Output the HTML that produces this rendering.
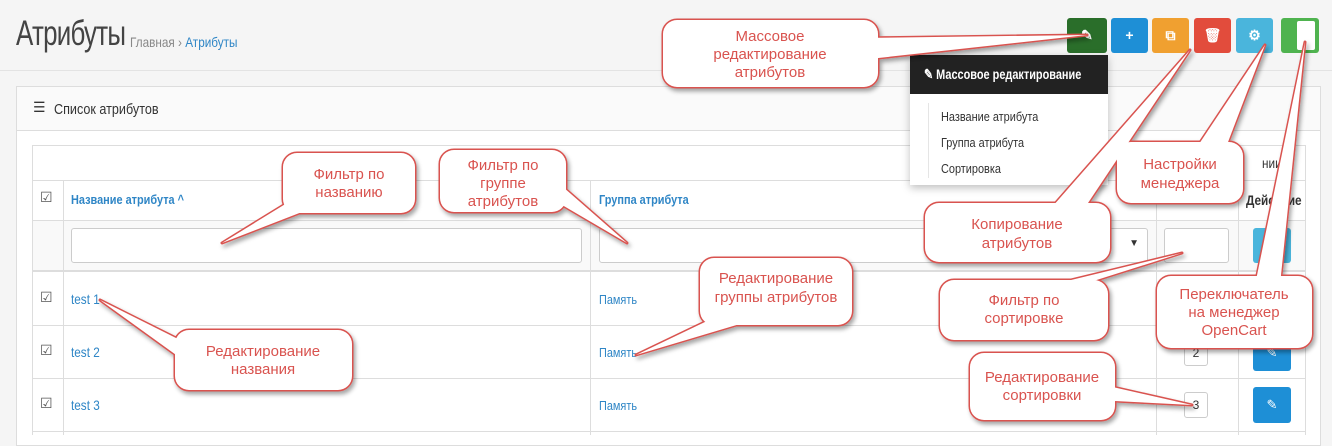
<!DOCTYPE html>
<html><head><meta charset="utf-8"><style>
*{margin:0;padding:0;box-sizing:border-box}
body{width:1332px;height:435px;overflow:hidden;background:#f5f5f5;position:relative;font-family:"Liberation Sans",sans-serif;color:#333}
.a{position:absolute;white-space:nowrap}
.n{transform:scaleX(.84);transform-origin:left center}
.h1{left:16px;top:14px;font-size:35px;color:#444;transform:scaleX(.74);transform-origin:left;letter-spacing:-1px}
.bc{left:130px;top:34px;font-size:14px;color:#888}
.bc b{font-weight:normal;color:#2f86c6}
.btn{top:18px;height:35px;width:37px;border-radius:3px;color:#fff;font-size:14px;font-weight:bold;text-align:center;line-height:35px}
.panel{left:16px;top:86px;width:1305px;height:360px;background:#fff;border:1px solid #ddd}
.ph{left:0;top:0;width:100%;height:44px;background:#fafafa;border-bottom:1px solid #ddd}
.line{background:#ddd}
.lnk{color:#2f86c6;font-size:14px}
.th{color:#2f86c6;font-weight:bold;font-size:13px}
.inp{background:#fff;border:1px solid #ccc;border-radius:3px}
.cb{font-size:14px;color:#555}
.eb{background:#1e8fd6;border-radius:3px;width:38px;height:36px}
.dd{left:910px;top:55px;width:198px;height:130px;background:#fff;box-shadow:0 3px 8px rgba(0,0,0,.25)}
.ddh{position:absolute;left:0;top:0;width:198px;height:39px;background:#222}
.ddi{font-size:13px;color:#333;position:absolute;left:31px}
</style></head><body>
<div class="a h1">Атрибуты</div>
<div class="a bc n">Главная › <b>Атрибуты</b></div>
<div class="a" style="left:0;top:70px;width:1332px;height:1px;background:#e3e3e3"></div>
<div class="a btn" style="left:1067px;background:#2a6e2a;width:40px">✎</div>
<div class="a btn" style="left:1111px;background:#1e8fd6">+</div>
<div class="a btn" style="left:1152px;background:#f0a030">⧉</div>
<div class="a btn" style="left:1194px;background:#e24c3c">🗑</div>
<div class="a btn" style="left:1236px;background:#4ab5dc">⚙</div>
<div class="a btn" style="left:1281px;background:#4fb34f;width:38px"><div class="a" style="left:16px;top:3px;width:18px;height:29px;background:#fff;border-radius:2px"></div></div>

<div class="a panel">
<div class="a ph"></div>
<div class="a" style="left:16px;top:12px;font-size:14px">☰</div>
<div class="a n" style="left:37px;top:14px;font-size:15px">Список атрибутов</div>
</div>
<div class="a" style="left:32px;top:145px;width:1274px;height:290px;border:1px solid #ddd;border-bottom:none;background:#fff"></div>
<div class="a" style="left:33px;top:220px;width:1272px;height:52px;background:#f9f9f9"></div>
<div class="a line" style="left:32px;top:180px;width:1274px;height:1px"></div>
<div class="a line" style="left:32px;top:220px;width:1274px;height:1px"></div>
<div class="a" style="left:32px;top:270px;width:1274px;height:2px;background:#ddd"></div>
<div class="a line" style="left:32px;top:325px;width:1274px;height:1px"></div>
<div class="a line" style="left:32px;top:378px;width:1274px;height:1px"></div>
<div class="a line" style="left:32px;top:431px;width:1274px;height:1px"></div>
<div class="a line" style="left:63px;top:180px;width:1px;height:255px"></div>
<div class="a line" style="left:590px;top:180px;width:1px;height:255px"></div>
<div class="a line" style="left:1156px;top:180px;width:1px;height:255px"></div>
<div class="a line" style="left:1238px;top:180px;width:1px;height:255px"></div>
<div class="a n" style="left:1262px;top:155px;font-size:14px">нии)</div>
<div class="a n" style="left:1246px;top:192px;font-size:14px;font-weight:bold">Действие</div>
<div class="a cb" style="left:40px;top:189px">☑</div>
<div class="a th n" style="left:71px;top:192px">Название атрибута ^</div>
<div class="a th n" style="left:599px;top:192px">Группа атрибута</div>
<div class="a inp" style="left:71px;top:228px;width:511px;height:35px"></div>
<div class="a inp" style="left:599px;top:228px;width:549px;height:35px"><span class="a" style="right:8px;top:9px;font-size:10px">▼</span></div>
<div class="a inp" style="left:1164px;top:228px;width:65px;height:35px"></div>
<div class="a" style="left:1253px;top:228px;width:38px;height:35px;background:#4ab5dc;border-radius:3px"></div>
<div class="a cb" style="left:40px;top:289px">☑</div>
<div class="a cb" style="left:40px;top:342px">☑</div>
<div class="a cb" style="left:40px;top:395px">☑</div>
<div class="a lnk n" style="left:71px;top:291px">test 1</div>
<div class="a lnk n" style="left:71px;top:344px">test 2</div>
<div class="a lnk n" style="left:71px;top:397px">test 3</div>
<div class="a lnk n" style="left:599px;top:292px;font-size:13px">Память</div>
<div class="a lnk n" style="left:599px;top:345px;font-size:13px">Память</div>
<div class="a lnk n" style="left:599px;top:398px;font-size:13px">Память</div>
<div class="a inp" style="left:1184px;top:340px;width:24px;height:26px;font-size:12px;text-align:center;line-height:24px">2</div>
<div class="a inp" style="left:1184px;top:392px;width:24px;height:26px;font-size:12px;text-align:center;line-height:24px">3</div>
<div class="a eb" style="left:1253px;top:335px;color:#fff;text-align:center;line-height:36px;font-size:13px">✎</div>
<div class="a eb" style="left:1253px;top:387px;color:#fff;text-align:center;line-height:36px;font-size:13px">✎</div>

<div class="a dd">
<div class="ddh"></div>
<div class="a n" style="left:14px;top:11px;color:#fff;font-size:14px;font-weight:bold;transform:scaleX(.78)">✎ Массовое редактирование</div>
<div class="a" style="left:18px;top:48px;width:1px;height:75px;background:#e5e5e5"></div>
<div class="ddi n" style="top:54px">Название атрибута</div>
<div class="ddi n" style="top:80px">Группа атрибута</div>
<div class="ddi n" style="top:106px">Сортировка</div>
</div>

<svg class="a" style="left:0;top:0" width="1332" height="435" font-family="Liberation Sans, sans-serif" font-size="15" fill="#d9534f">
<defs><filter id="s" x="-20%" y="-20%" width="140%" height="140%"><feDropShadow dx="2" dy="3" stdDeviation="2" flood-opacity=".35"/></filter></defs>
<g filter="url(#s)" stroke="#d9534f" stroke-width="3" fill="#fff" stroke-linejoin="round">
<polygon points="860,38 1087,35 860,60"/><rect x="663" y="20" width="215" height="67" rx="14"/>
<polygon points="300,195 222,243 320,205"/><rect x="283" y="153" width="132" height="60" rx="14"/>
<polygon points="545,195 627,243 555,180"/><rect x="440" y="150" width="126" height="62" rx="14"/>
<polygon points="1195,150 1265,45 1225,150"/><rect x="1117" y="142" width="126" height="61" rx="14"/>
<polygon points="1045,215 1190,50 1080,215"/><rect x="925" y="203" width="185" height="59" rx="14"/>
<polygon points="1030,290 1182,253 1065,290"/><rect x="940" y="280" width="168" height="60" rx="14"/>
<polygon points="1255,285 1305,42 1280,285"/><rect x="1157" y="276" width="155" height="72" rx="14"/>
<polygon points="730,310 636,355 760,318"/><rect x="700" y="258" width="152" height="67" rx="14"/>
<polygon points="190,345 100,300 190,365"/><rect x="175" y="330" width="177" height="60" rx="14"/>
<polygon points="1095,383 1192,405 1095,400"/><rect x="970" y="353" width="145" height="67" rx="14"/>
</g>
<g fill="#fff">
<polygon points="860,38 1087,35 860,60"/><rect x="663" y="20" width="215" height="67" rx="14"/>
<polygon points="300,195 222,243 320,205"/><rect x="283" y="153" width="132" height="60" rx="14"/>
<polygon points="545,195 627,243 555,180"/><rect x="440" y="150" width="126" height="62" rx="14"/>
<polygon points="1195,150 1265,45 1225,150"/><rect x="1117" y="142" width="126" height="61" rx="14"/>
<polygon points="1045,215 1190,50 1080,215"/><rect x="925" y="203" width="185" height="59" rx="14"/>
<polygon points="1030,290 1182,253 1065,290"/><rect x="940" y="280" width="168" height="60" rx="14"/>
<polygon points="1255,285 1305,42 1280,285"/><rect x="1157" y="276" width="155" height="72" rx="14"/>
<polygon points="730,310 636,355 760,318"/><rect x="700" y="258" width="152" height="67" rx="14"/>
<polygon points="190,345 100,300 190,365"/><rect x="175" y="330" width="177" height="60" rx="14"/>
<polygon points="1095,383 1192,405 1095,400"/><rect x="970" y="353" width="145" height="67" rx="14"/>
</g>
<g text-anchor="middle">
<text x="770" y="41">Массовое</text><text x="770" y="59">редактирование</text><text x="770" y="77">атрибутов</text>
<text x="349" y="179">Фильтр по</text><text x="349" y="197">названию</text>
<text x="503" y="170">Фильтр по</text><text x="503" y="188">группе</text><text x="503" y="206">атрибутов</text>
<text x="1180" y="169">Настройки</text><text x="1180" y="188">менеджера</text>
<text x="1017" y="229">Копирование</text><text x="1017" y="248">атрибутов</text>
<text x="1024" y="305">Фильтр по</text><text x="1024" y="323">сортировке</text>
<text x="1234" y="299">Переключатель</text><text x="1234" y="317">на менеджер</text><text x="1234" y="335">OpenCart</text>
<text x="776" y="283">Редактирование</text><text x="776" y="302">группы атрибутов</text>
<text x="263" y="356">Редактирование</text><text x="263" y="374">названия</text>
<text x="1042" y="382">Редактирование</text><text x="1042" y="400">сортировки</text>
</g>
</svg>
</body></html>
